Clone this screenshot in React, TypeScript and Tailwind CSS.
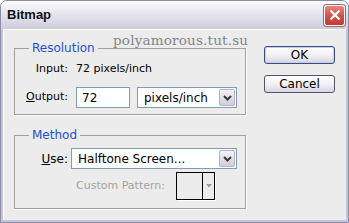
import React from "react";

const Chevron = () => (
  <svg width="9" height="6" viewBox="0 0 9 6">
    <path d="M1 1l3.5 3.5L8 1" stroke="#3a3a3a" strokeWidth="2" fill="none" />
  </svg>
);

const ArrowBox = () => (
  <div className="w-[16px] flex items-center justify-center rounded-[2px] border border-[#b3b2c8] bg-gradient-to-b from-[#f3f3f7] to-[#cfcfdb]">
    <Chevron />
  </div>
);

const XButton = ({ label, primary }: { label: string; primary?: boolean }) => (
  <div
    className={
      "w-[71px] h-[18px] flex items-center justify-center rounded-[3px] border bg-gradient-to-b from-[#ffffff] via-[#f1f1f5] to-[#d6d5e0] text-[12px] text-black " +
      (primary ? "border-[#3d4a80] shadow-[inset_0_0_0_1px_#c4cdee]" : "border-[#52526e]")
    }
  >
    {label}
  </div>
);

export default function App() {
  return (
    <div className="w-[349px] h-[223px] flex flex-col rounded-t-[7px] bg-[#c6c5d7] border border-[#8e8da8] font-['DejaVu_Sans',sans-serif] text-[11px] text-black overflow-hidden">
      {/* title bar */}
      <div className="h-[28px] flex items-center pl-[6px] pr-[3px] bg-gradient-to-b from-[#fbfbfd] via-[#e4e3ec] to-[#cdccdb]">
        <span className="font-['Liberation_Sans',sans-serif] font-bold text-[13px] text-[#111]">Bitmap</span>
        <div className="ml-auto w-[21px] h-[21px] rounded-[3px] border border-white shadow-[0_0_0_1px_#9a6a6a] bg-gradient-to-b from-[#e8877d] via-[#d4524a] to-[#c13a30] flex items-center justify-center">
          <svg width="12" height="12" viewBox="0 0 12 12">
            <path d="M1.5 1.5l9 9M10.5 1.5l-9 9" stroke="#fff" strokeWidth="2.2" />
          </svg>
        </div>
      </div>

      {/* dialog body */}
      <div className="relative flex-1 mx-[2px] mb-[2px] flex bg-[#ececec] border-l border-t border-white pl-[10px]">
        <span className="absolute left-[109px] top-[0px] font-['DejaVu_Serif',serif] text-[13.5px] tracking-[0.2px] text-[#858585]">
          polyamorous.tut.su
        </span>

        <div className="w-[232px] pt-[18px] flex flex-col">
          {/* Resolution */}
          <div className="relative h-[67px] border border-[#a0a0a0] shadow-[1px_1px_0_#fff] pt-[13px]">
            <span className="absolute -top-[8px] left-[14px] px-[3px] bg-[#ececec] text-[#1d4fd8] text-[12px] leading-[14px]">
              Resolution
            </span>
            <div className="flex items-center h-[14px]">
              <span className="w-[53px] text-right">Input:</span>
              <span className="ml-[8px]">72 pixels/inch</span>
            </div>
            <div className="flex items-center mt-[11px] h-[21px]">
              <span className="w-[53px] text-right">
                <span className="underline">O</span>utput:
              </span>
              <div className="ml-[8px] w-[54px] h-[21px] border border-[#7f9db9] bg-white pl-[5px] flex items-center text-[12px]">
                72
              </div>
              <div className="ml-[7px] w-[100px] h-[21px] flex border border-[#7f9db9] bg-white p-[1px]">
                <span className="flex-1 pl-[5px] flex items-center text-[12px]">pixels/inch</span>
                <ArrowBox />
              </div>
            </div>
          </div>

          {/* Method */}
          <div className="relative mt-[20px] h-[74px] border border-[#a0a0a0] shadow-[1px_1px_0_#fff] pt-[12px]">
            <span className="absolute -top-[8px] left-[14px] px-[3px] bg-[#ececec] text-[#1d4fd8] text-[12px] leading-[14px]">
              Method
            </span>
            <div className="flex items-center h-[21px]">
              <span className="w-[53px] text-right text-[12px]">
                <span className="underline">U</span>se:
              </span>
              <div className="ml-[3px] w-[166px] h-[21px] flex border border-[#7f9db9] bg-white p-[1px]">
                <span className="flex-1 pl-[5px] flex items-center text-[12px]">Halftone Screen...</span>
                <ArrowBox />
              </div>
            </div>
            <div className="flex items-center mt-[3px] h-[28px]">
              <span className="w-[150px] text-right text-[#a3a3a3]">Custom Pattern:</span>
              <div className="ml-[11px] w-[39px] h-[28px] flex border border-black bg-[#ececec] shadow-[1px_1px_0_#fff]">
                <div className="flex-1 border-r border-black" />
                <div className="w-[11px] flex items-center justify-center">
                  <svg width="6" height="4" viewBox="0 0 6 4">
                    <path d="M0 0h6L3 3.5z" fill="#9a9a9a" />
                  </svg>
                </div>
              </div>
            </div>
          </div>
        </div>

        {/* buttons */}
        <div className="ml-[18px] pt-[16px] flex flex-col gap-[11px]">
          <XButton label="OK" primary />
          <XButton label="Cancel" />
        </div>
      </div>
    </div>
  );
}
